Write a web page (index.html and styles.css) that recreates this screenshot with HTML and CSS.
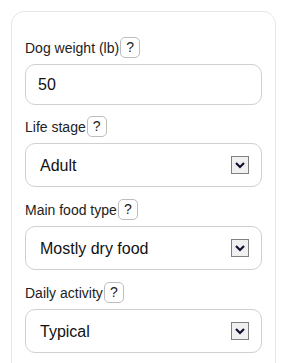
FILE: index.html
```html
<!DOCTYPE html>
<html lang="en">
<head>
    <meta charset="UTF-8">
    <meta name="viewport" content="width=device-width, initial-scale=1.0">
    <title>Dog Food Calculator</title>
    <link rel="stylesheet" href="styles.css">
</head>
<body>
    <div class="card">
        <div class="field">
            <label class="field-label" for="weight">Dog weight (lb)<button class="help-btn" type="button">?</button></label>
            <input class="text-input" id="weight" type="text" value="50">
        </div>

        <div class="field field-select">
            <label class="field-label" for="stage">Life stage<button class="help-btn" type="button">?</button></label>
            <select class="select-input" id="stage">
                <option>Adult</option>
                <option>Puppy</option>
                <option>Senior</option>
            </select>
        </div>

        <div class="field field-select">
            <label class="field-label" for="food">Main food type<button class="help-btn" type="button">?</button></label>
            <select class="select-input" id="food">
                <option>Mostly dry food</option>
                <option>Mostly wet food</option>
                <option>Mixed</option>
            </select>
        </div>

        <div class="field field-select">
            <label class="field-label" for="activity">Daily activity<button class="help-btn" type="button">?</button></label>
            <select class="select-input" id="activity">
                <option>Typical</option>
                <option>Low</option>
                <option>High</option>
            </select>
        </div>
    </div>
</body>
</html>
```

FILE: styles.css
```css
* {
    margin: 0;
    padding: 0;
    box-sizing: border-box;
}

html, body {
    overflow: hidden;
}

body {
    font-family: 'Liberation Sans', Arial, sans-serif;
    background: #fff;
    color: #222;
    padding: 11px;
}

.card {
    background: #fff;
    border: 1px solid #e6e6e6;
    border-radius: 13px;
    padding: 25px 13px 30px;
}

.field {
    display: flex;
    flex-direction: column;
    gap: 6px;
    margin-bottom: 11px;
}

.field-select {
    margin-bottom: 12px;
}

.field-label {
    display: flex;
    align-items: center;
    font-size: 14px;
    color: #222;
    height: 21px;
}

.help-btn {
    flex: none;
    width: 20px;
    height: 21px;
    margin-left: 1px;
    border: 1px solid #bdbdbd;
    border-radius: 5px;
    background: #fff;
    color: #222;
    font-family: 'Liberation Sans', Arial, sans-serif;
    font-size: 14px;
    line-height: 19px;
    text-align: center;
    cursor: pointer;
}

.text-input,
.select-input {
    width: 100%;
    border: 1px solid #d0d0d0;
    border-radius: 10px;
    background: #fff;
    color: #111;
    font-family: 'Liberation Sans', Arial, sans-serif;
    font-size: 16px;
    outline: none;
}

.text-input {
    height: 41px;
    padding: 0 12px;
}

.select-input {
    height: 44px;
    padding: 0 40px 0 14px;
    appearance: none;
    -webkit-appearance: none;
    background-color: #fff;
    background-image: url("data:image/svg+xml,%3Csvg xmlns='http://www.w3.org/2000/svg' width='18' height='18' viewBox='0 0 18 18'%3E%3Crect x='0.5' y='0.5' width='17' height='17' fill='%23f0f0f0' stroke='%23808080'/%3E%3Cpath d='M5 7 L9 11 L13 7' fill='none' stroke='%23101030' stroke-width='2.2'/%3E%3C/svg%3E");
    background-repeat: no-repeat;
    background-position: right 12px center;
    background-size: 18px 18px;
}
```
